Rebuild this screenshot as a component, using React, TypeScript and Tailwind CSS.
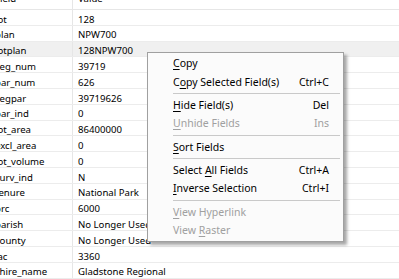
import React from 'react'

const rows: [string, string][] = [
  ['lot', '128'],
  ['plan', 'NPW700'],
  ['lotplan', '128NPW700'],
  ['seg_num', '39719'],
  ['par_num', '626'],
  ['segpar', '39719626'],
  ['par_ind', '0'],
  ['lot_area', '86400000'],
  ['excl_area', '0'],
  ['lot_volume', '0'],
  ['surv_ind', 'N'],
  ['tenure', 'National Park'],
  ['prc', '6000'],
  ['parish', 'No Longer Used'],
  ['county', 'No Longer Used'],
  ['lac', '3360'],
  ['shire_name', 'Gladstone Regional'],
  ['locality', 'Castle Hill'],
]

type Item =
  | { sep: true }
  | { sep?: false; pre: string; key: string; post: string; shortcut?: string; disabled?: boolean }

const menu: Item[] = [
  { pre: '', key: 'C', post: 'opy' },
  { pre: 'C', key: 'o', post: 'py Selected Field(s)', shortcut: 'Ctrl+C' },
  { sep: true },
  { pre: '', key: 'H', post: 'ide Field(s)', shortcut: 'Del' },
  { pre: '', key: 'U', post: 'nhide Fields', shortcut: 'Ins', disabled: true },
  { sep: true },
  { pre: '', key: 'S', post: 'ort Fields' },
  { sep: true },
  { pre: 'Select ', key: 'A', post: 'll Fields', shortcut: 'Ctrl+A' },
  { pre: '', key: 'I', post: 'nverse Selection', shortcut: 'Ctrl+I' },
  { sep: true },
  { pre: '', key: 'V', post: 'iew Hyperlink', disabled: true },
  { pre: 'View ', key: 'R', post: 'aster', disabled: true },
]

export default function App() {
  return (
    <div
      className="relative w-[399px] h-[279px] overflow-hidden bg-white text-[9.6px] text-[#000]"
      style={{ fontFamily: '"Noto Sans", "Open Sans", sans-serif' }}
    >
      {/* attribute table */}
      <div className="mt-[-6px]">
        <div className="flex h-[16px] border-b border-[#e6e6e6] leading-none">
          <div className="w-[73px] shrink-0 h-full flex items-center pb-[6px] border-r border-[#e6e6e6]">
            <span className="ml-[-5px] whitespace-nowrap">Field</span>
          </div>
          <div className="h-full flex items-center pb-[6px] pl-[5px]">Value</div>
        </div>
        {rows.map(([field, value]) => (
          <div
            key={field}
            className={`flex h-[15.8px] border-b border-[#ececec] leading-none ${
              field === 'lotplan' ? 'bg-[#f0f0f0]' : ''
            }`}
          >
            <div className="w-[73px] shrink-0 h-full flex items-center pt-[4px] border-r border-[#e6e6e6]">
              <span className="ml-[-5px] whitespace-nowrap">{field}</span>
            </div>
            <div className="h-full flex items-center pt-[4px] pl-[5px] whitespace-nowrap">{value}</div>
          </div>
        ))}
      </div>

      {/* context menu */}
      <div className="absolute left-[147px] top-[52px] w-[197px] bg-[#fbfbfb] border border-[#a0a0a0] py-[1px] text-[10.5px] shadow-[3px_3px_3px_rgba(0,0,0,0.35)]">
        {menu.map((item, i) =>
          item.sep ? (
            <div key={i} className="h-[4.6px] flex items-center ml-[25px] mr-[3px]">
              <div className="h-px w-full bg-[#c9c9c9]" />
            </div>
          ) : (
            <div
              key={i}
              className={`flex h-[18.6px] items-center pl-[25px] pr-[14px] leading-none ${
                item.disabled ? 'text-[#a0a0a0]' : 'text-[#000]'
              }`}
            >
              <span className="whitespace-nowrap">
                {item.pre}
                <span className="underline underline-offset-[2px] decoration-1">{item.key}</span>
                {item.post}
              </span>
              {item.shortcut && <span className="ml-auto">{item.shortcut}</span>}
            </div>
          )
        )}
      </div>
    </div>
  )
}
